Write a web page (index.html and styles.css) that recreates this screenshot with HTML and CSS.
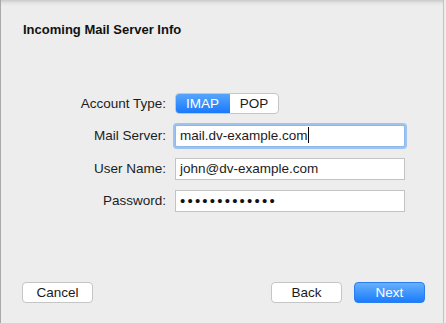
FILE: index.html
```html
<!DOCTYPE html>
<html lang="en">

<head>
  <meta charset="UTF-8">
  <meta name="viewport" content="width=device-width, initial-scale=1.0">
  <title>Incoming Mail Server Info</title>
  <link rel="stylesheet" href="styles.css">
</head>

<body>
  <div class="sheet">
    <h1 class="title">Incoming Mail Server Info</h1>

    <form class="form">
      <label class="label">Account Type:</label>
      <div class="segmented">
        <span class="segment active">IMAP</span>
        <span class="segment">POP</span>
      </div>

      <label class="label">Mail Server:</label>
      <div class="field focused">mail.dv-example.com<span class="caret"></span></div>

      <label class="label">User Name:</label>
      <div class="field">john@dv-example.com</div>

      <label class="label">Password:</label>
      <div class="field dots">&bull;&bull;&bull;&bull;&bull;&bull;&bull;&bull;&bull;&bull;&bull;&bull;&bull;</div>
    </form>

    <div class="actions">
      <button class="btn" type="button">Cancel</button>
      <div class="actions-right">
        <button class="btn" type="button">Back</button>
        <button class="btn primary" type="button">Next</button>
      </div>
    </div>
  </div>
</body>

</html>
```

FILE: styles.css
```css
* {
  margin: 0;
  padding: 0;
  box-sizing: border-box;
}

html,
body {
  width: 100vw;
  height: 100vh;
  overflow: hidden;
}

body {
  background: #ececec;
  font-family: "Liberation Sans", Arial, Helvetica, sans-serif;
  font-size: 13.5px;
  color: #1c1c1c;
}

.sheet {
  width: 444px;
  height: 323px;
  display: flex;
  flex-direction: column;
  background: linear-gradient(#c9c9c9 0, #e4e4e4 3px, #ededed 6px, #ededed 100%);
  border-left: 1px solid #a9a9a9;
  border-right: 1px solid #c4c4c4;
}

.title {
  font-size: 13px;
  font-weight: bold;
  color: #111;
  padding: 22px 0 0 22px;
  line-height: 16px;
}

.form {
  display: grid;
  grid-template-columns: 145px 230px;
  column-gap: 9px;
  row-gap: 10px;
  align-items: center;
  margin-top: 55px;
  padding-left: 20px;
}

.label {
  text-align: right;
  line-height: 16px;
}

.segmented {
  display: flex;
  width: 104px;
  height: 21px;
  border: 1px solid #c6c6c6;
  border-radius: 4px;
  background: #fff;
  overflow: hidden;
}

.segment {
  flex: 1;
  display: flex;
  align-items: center;
  justify-content: center;
  color: #1a1a1a;
}

.segment.active {
  flex: 0 0 55px;
  color: #fff;
  background: linear-gradient(#5aa8fb, #1677fd);
  margin: -1px 0 -1px -1px;
}

.field {
  height: 22px;
  border: 1px solid #c3c3c3;
  background: #fff;
  padding: 0 4px;
  line-height: 20px;
  white-space: nowrap;
}

.field.focused {
  border-color: #8fb8ea;
  box-shadow: 0 0 0 2px #9ec3f0;
  border-radius: 2px;
  margin: 1px 0;
}

.caret {
  display: inline-block;
  width: 1px;
  height: 16px;
  background: #000;
  vertical-align: -3px;
}

.dots {
  font-size: 15px;
  letter-spacing: 2.2px;
  color: #111;
}

.actions {
  margin-top: auto;
  display: flex;
  justify-content: space-between;
  padding: 0 18px 20px 21px;
}

.actions-right {
  display: flex;
  gap: 12px;
}

.btn {
  width: 71px;
  height: 21px;
  border: 1px solid #c5c5c5;
  border-radius: 4px;
  background: #fff;
  font-family: inherit;
  font-size: 13.5px;
  color: #1a1a1a;
}

.btn.primary {
  color: #fff;
  border-color: #2a7ef0;
  background: linear-gradient(#67b0fb, #1a7cfd);
}
```
